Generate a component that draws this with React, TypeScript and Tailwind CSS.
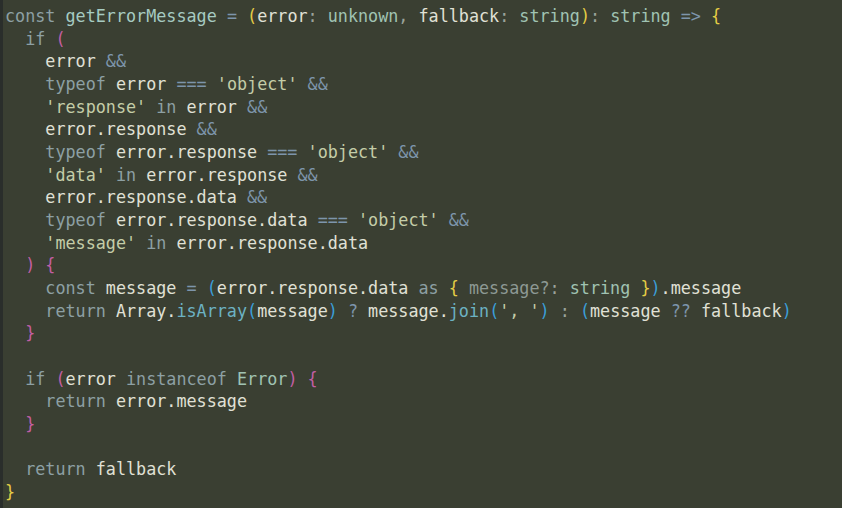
import React from "react";

type Tok = [string, string];

const pl = "text-[#e0e1d6]";
const kw = "text-[#8da0a4]";
const fn = "text-[#a6cbc2]";
const ty = "text-[#a0c3b2]";
const st = "text-[#c4cda8]";
const op = "text-[#7d95ab]";
const pu = "text-[#9aa39a]";
const me = "text-[#6cb2c3]";
const y1 = "text-[#e4cd45]";
const p2 = "text-[#c25ea4]";
const b3 = "text-[#3a9ed8]";
const pk = "text-[#8d9994]";

const lines: Tok[][] = [
  [["const ", kw], ["getErrorMessage ", fn], ["= ", op], ["(", y1], ["error", pl], [": ", pu], ["unknown", ty], [", ", pu], ["fallback", pl], [": ", pu], ["string", ty], [")", y1], [": ", pu], ["string ", ty], ["=> ", op], ["{", y1]],
  [["  if ", kw], ["(", p2]],
  [["    error ", pl], ["&&", op]],
  [["    typeof ", kw], ["error ", pl], ["=== ", op], ["'object' ", st], ["&&", op]],
  [["    'response' ", st], ["in ", kw], ["error ", pl], ["&&", op]],
  [["    error.response ", pl], ["&&", op]],
  [["    typeof ", kw], ["error.response ", pl], ["=== ", op], ["'object' ", st], ["&&", op]],
  [["    'data' ", st], ["in ", kw], ["error.response ", pl], ["&&", op]],
  [["    error.response.data ", pl], ["&&", op]],
  [["    typeof ", kw], ["error.response.data ", pl], ["=== ", op], ["'object' ", st], ["&&", op]],
  [["    'message' ", st], ["in ", kw], ["error.response.data", pl]],
  [["  ) {", p2]],
  [["    const ", kw], ["message ", pl], ["= ", op], ["(", b3], ["error.response.data ", pl], ["as ", kw], ["{ ", y1], ["message?", pk], [": ", pu], ["string ", ty], ["}", y1], [")", b3], [".message", pl]],
  [["    return ", kw], ["Array.", pl], ["isArray", me], ["(", b3], ["message", pl], [")", b3], [" ? ", op], ["message.", pl], ["join", me], ["(", b3], ["', '", st], [")", b3], [" : ", pu], ["(", b3], ["message ", pl], ["?? ", op], ["fallback", pl], [")", b3]],
  [["  }", p2]],
  [["", pl]],
  [["  if ", kw], ["(", p2], ["error ", pl], ["instanceof ", kw], ["Error", ty], [")", p2], [" {", p2]],
  [["    return ", kw], ["error.message", pl]],
  [["  }", p2]],
  [["", pl]],
  [["  return ", kw], ["fallback", pl]],
  [["}", y1]],
];

export default function App() {
  return (
    <div className="w-[842px] h-[508px] bg-[#3a3f32] flex overflow-hidden">
      <div className="w-[3px] h-full bg-[#2a2e2b]" />
      <pre className="pl-[2px] pt-[5px] font-['DejaVu_Sans_Mono',monospace] text-[16.75px] leading-[22.67px]">
        {lines.map((line, i) => (
          <div key={i} className="h-[22.67px] whitespace-pre">
            {line.map(([t, c], j) => (
              <span key={j} className={c}>
                {t}
              </span>
            ))}
          </div>
        ))}
      </pre>
    </div>
  );
}
